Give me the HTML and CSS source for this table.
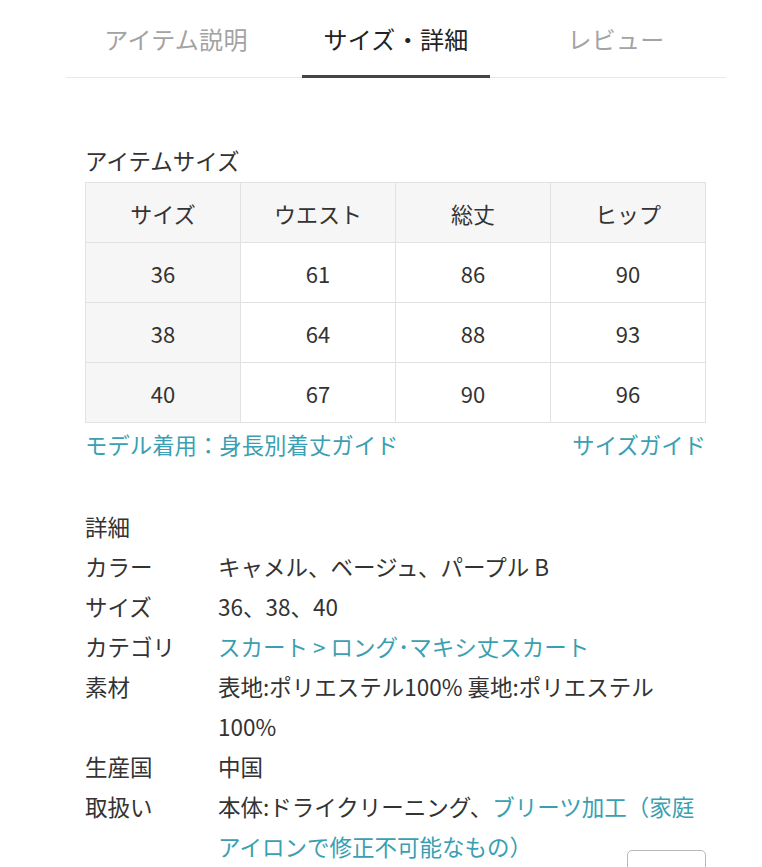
FILE: index.html
```html
<!DOCTYPE html>
<html lang="ja">
<head>
<meta charset="utf-8">
<title>サイズ・詳細</title>
<link rel="stylesheet" href="styles.css">
</head>
<body>
<div class="page">
  <nav class="tabs">
    <div class="tab">アイテム説明</div>
    <div class="tab active">サイズ・詳細</div>
    <div class="tab">レビュー</div>
  </nav>

  <section class="content">
    <h2 class="heading">アイテムサイズ</h2>
    <table class="size-table">
      <tr class="head"><th>サイズ</th><th>ウエスト</th><th>総丈</th><th>ヒップ</th></tr>
      <tr><th>36</th><td>61</td><td>86</td><td>90</td></tr>
      <tr><th>38</th><td>64</td><td>88</td><td>93</td></tr>
      <tr><th>40</th><td>67</td><td>90</td><td>96</td></tr>
    </table>
    <div class="guide-links">
      <a class="link">モデル着用：身長別着丈ガイド</a>
      <a class="link">サイズガイド</a>
    </div>

    <h2 class="heading detail-heading">詳細</h2>
    <dl class="details">
      <div class="row"><dt>カラー</dt><dd>キャメル、ベージュ、パープル B</dd></div>
      <div class="row"><dt>サイズ</dt><dd>36、38、40</dd></div>
      <div class="row"><dt>カテゴリ</dt><dd><a class="link">スカート &gt; ロング･マキシ丈スカート</a></dd></div>
      <div class="row"><dt>素材</dt><dd>表地:ポリエステル100% 裏地:ポリエステル100%</dd></div>
      <div class="row"><dt>生産国</dt><dd>中国</dd></div>
      <div class="row"><dt>取扱い</dt><dd>本体:ドライクリーニング、<a class="link">ブリーツ加工（家庭アイロンで修正不可能なもの）</a></dd></div>
    </dl>
  </section>
  <div class="float-btn"></div>
</div>
</body>
</html>
```

FILE: styles.css
```css
* { box-sizing: border-box; }
html, body { margin: 0; padding: 0; background: #fff; }
body {
  font-family: "Noto Sans CJK JP", "Noto Sans", sans-serif;
  color: #333;
  overflow: hidden;
}
.page {
  position: relative;
  width: 762px;
  height: 867px;
  padding: 0 36px 0 66px;
}
.tabs {
  display: grid;
  grid-template-columns: repeat(3, 1fr);
  height: 78px;
  border-bottom: 1px solid #e8e8e8;
}
.tab {
  position: relative;
  display: flex;
  align-items: center;
  justify-content: center;
  padding-bottom: 1px;
  font-size: 24px;
  color: #a3a3a3;
  letter-spacing: 0.3px;
}
.tab.active { color: #222; }
.tab.active::after {
  content: "";
  position: absolute;
  left: 50%;
  bottom: -1px;
  width: 188px;
  margin-left: -94px;
  height: 3px;
  background: #444;
}
.content { padding: 0 20px 0 19px; }
.heading {
  margin: 67px 0 7px;
  font-size: 22.5px;
  font-weight: normal;
  line-height: 30px;
  color: #333;
}
.size-table {
  width: 100%;
  border-collapse: collapse;
  table-layout: fixed;
  border: 1px solid #e2e2e2;
}
.size-table th, .size-table td {
  height: 60px;
  border: 1px solid #e2e2e2;
  text-align: center;
  font-size: 22px;
  font-weight: normal;
  color: #333;
  padding: 0;
}
.size-table th { background: #f6f6f6; }
.guide-links {
  display: flex;
  justify-content: space-between;
  margin-top: 6px;
  line-height: 30px;
  font-size: 22.4px;
}
.link { color: #3a9fb2; text-decoration: none; }
.detail-heading { margin: 47px 0 0; line-height: 40px; }
.details { margin: 0; font-size: 22.5px; line-height: 40px; }
.row { display: flex; }
.row dt { flex: 0 0 133px; }
.row dd { margin: 0; flex: 1; min-width: 0; }
.float-btn {
  position: absolute;
  left: 627px;
  top: 850px;
  width: 79px;
  height: 40px;
  border: 1.5px solid #b8b8b8;
  border-radius: 5px;
  background: #fff;
}
```
